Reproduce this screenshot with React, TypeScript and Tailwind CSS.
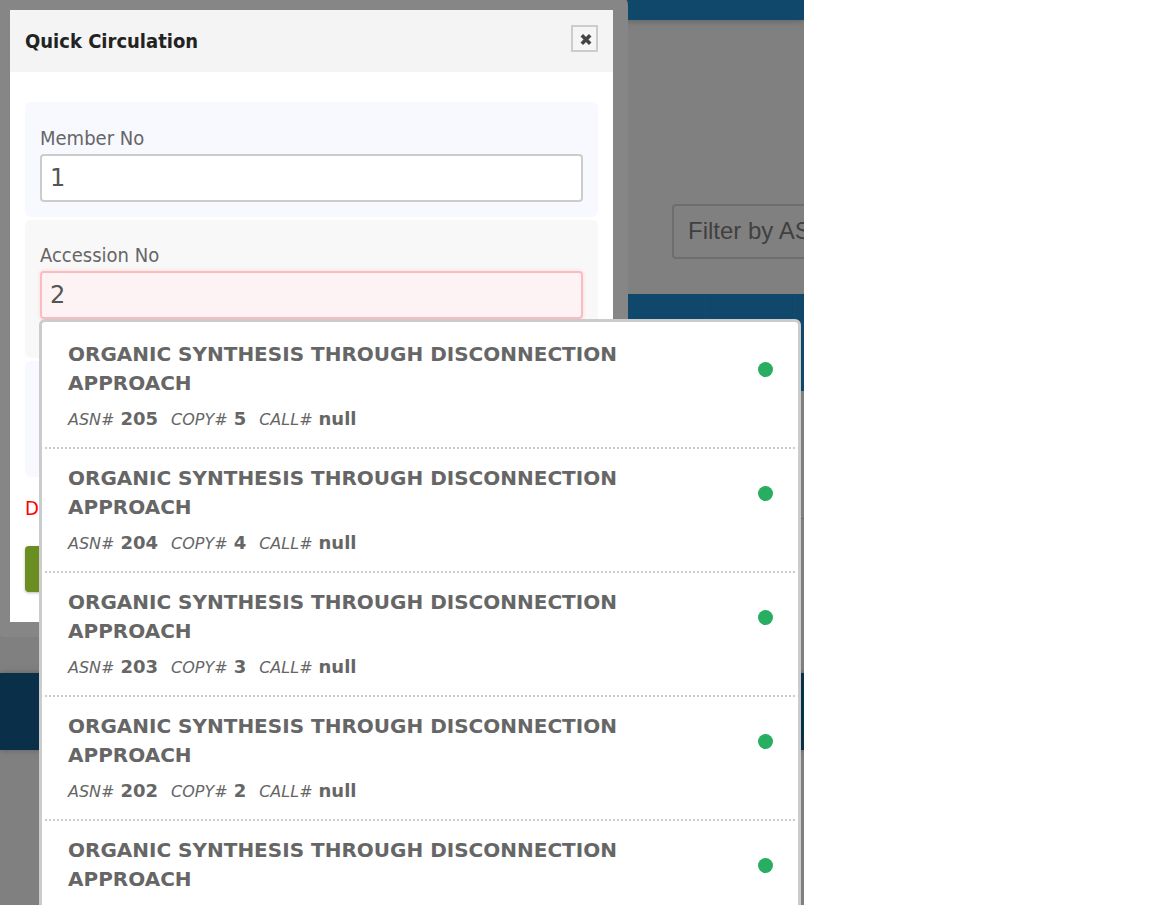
type Holding = { asn: string; copy: string; call: string };

const TITLE = 'ORGANIC SYNTHESIS THROUGH DISCONNECTION APPROACH';

const holdings: Holding[] = [
  { asn: '205', copy: '5', call: 'null' },
  { asn: '204', copy: '4', call: 'null' },
  { asn: '203', copy: '3', call: 'null' },
  { asn: '202', copy: '2', call: 'null' },
  { asn: '201', copy: '1', call: 'null' },
];

function Meta({ label, value }: { label: string; value: string }) {
  return (
    <span className="flex items-baseline gap-1.5">
      <em className="text-base leading-7">{label}</em>
      <strong className="text-lg leading-7">{value}</strong>
    </span>
  );
}

function Suggestions() {
  return (
    <ul className="absolute top-full -left-px z-10 w-[762px] rounded-md border-3 border-[#ccc] bg-white p-[3px] font-['Verdana','DejaVu_Sans',sans-serif] text-[#666]">
      {holdings.map((h) => (
        <li
          key={h.asn}
          className="flex h-[124px] items-start justify-between border-b-2 border-dotted border-[#ccc] pt-[15px] pr-[22px] pl-[23px]"
        >
          <div className="w-[600px]">
            <h3 className="text-xl leading-[29px] font-bold">{TITLE}</h3>
            <p className="mt-[7px] flex gap-[13px]">
              <Meta label="ASN#" value={h.asn} />
              <Meta label="COPY#" value={h.copy} />
              <Meta label="CALL#" value={h.call} />
            </p>
          </div>
          <span className="mt-[22px] size-[15px] rounded-full bg-[#27ae60]" />
        </li>
      ))}
    </ul>
  );
}

function Backdrop() {
  return (
    <div className="mr-[348px] flex h-full flex-col overflow-hidden bg-[#808080]">
      <div className="z-0 h-5 shrink-0 bg-[#10486c] shadow-[0_1px_6px_#606060]" />
      <div className="flex h-[274px] shrink-0 items-end pb-[35px] pl-[672px]">
        <input
          aria-label="Filter"
          placeholder="Filter by AS"
          className="h-[55px] w-[300px] shrink-0 rounded border-2 border-[#6e6e6e] bg-[#808080] px-3.5 pb-0.5 font-['Liberation_Sans',sans-serif] text-2xl placeholder:text-[#404040]"
        />
      </div>
      <div className="flex h-[97px] shrink-0 bg-[#10486c] pl-[705px]">
        <div className="w-[91px] border-x-2 border-dotted border-[#16496c]" />
      </div>
      <div className="h-32 shrink-0 border-b border-[#5c7080]" />
      <div className="h-[154px] shrink-0" />
      <div className="h-[77px] shrink-0 bg-[#0a3049] shadow-[0_0_6px_#606060]" />
    </div>
  );
}

const inputBase =
  "block h-12 w-full rounded border-2 px-2 font-['Verdana','DejaVu_Sans',sans-serif] text-2xl text-[#555] outline-none";
const labelBase = 'block pb-0.5 text-xl leading-7 text-[#666]';

function Dialog() {
  return (
    <div className="absolute -top-[5px] -left-[5px] rounded-[10px] bg-[#868686] p-[15px]">
      <section
        role="dialog"
        aria-labelledby="dialog-title"
        className="w-[603px] bg-white font-['Tahoma','DejaVu_Sans_Condensed',sans-serif]"
      >
        <header className="flex h-[62px] items-start justify-between bg-[#f4f4f4] px-[15px] pt-[15px]">
          <h2 id="dialog-title" className="pt-1 text-xl leading-6 font-bold text-[#222]">
            Quick Circulation
          </h2>
          <button
            type="button"
            aria-label="Close"
            className="flex size-[27px] items-center justify-center border-2 border-[#ccc] bg-[#f5f5f5]"
          >
            <svg viewBox="0 0 12 12" className="ml-0.5 size-3" fill="none" stroke="#444" strokeWidth="3.6">
              <path d="M1.8 2.3 10.2 10.7M10.2 2.3 1.8 10.7" />
            </svg>
          </button>
        </header>
        <form className="px-[15px] py-[30px]">
          <div className="flex flex-col gap-[3px]">
            <div className="rounded-md bg-[#f8f9ff] px-[15px] pt-[22px] pb-[15px]">
              <label htmlFor="member" className={labelBase}>
                Member No
              </label>
              <input id="member" defaultValue="1" className={`${inputBase} border-[#ccc] bg-white`} />
            </div>
            <div className="h-[138px] rounded-md bg-[#f8f8f8] px-[15px] pt-[21px]">
              <label htmlFor="accession" className={labelBase}>
                Accession No
              </label>
              <div className="relative">
                <input
                  id="accession"
                  defaultValue="2"
                  className={`${inputBase} border-[#fbbcbf] bg-[#fdf3f4] shadow-[0_0_4px_#fbd5d7]`}
                />
                <Suggestions />
              </div>
            </div>
            <div className="h-[116px] rounded-md bg-[#f8f9ff]" />
          </div>
          <p className="mt-[17px] text-xl leading-[29px] text-[#f00]">D</p>
          <button
            type="submit"
            aria-label="Submit"
            className="mt-[23px] block h-[46px] w-[150px] rounded bg-[#6b8e23] shadow-[0_1px_3px_#bbb]"
          />
        </form>
      </section>
    </div>
  );
}

export default function App() {
  return (
    <main className="relative h-screen overflow-hidden bg-white">
      <Backdrop />
      <Dialog />
    </main>
  );
}
